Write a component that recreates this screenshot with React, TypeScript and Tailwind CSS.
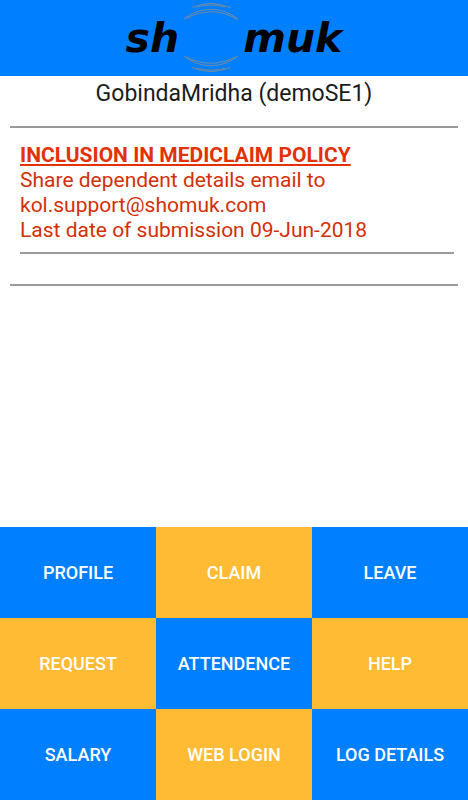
type MenuItem = {
  label: string
  accent: boolean
}

const menu: MenuItem[] = [
  { label: 'PROFILE', accent: false },
  { label: 'CLAIM', accent: true },
  { label: 'LEAVE', accent: false },
  { label: 'REQUEST', accent: true },
  { label: 'ATTENDENCE', accent: false },
  { label: 'HELP', accent: true },
  { label: 'SALARY', accent: false },
  { label: 'WEB LOGIN', accent: true },
  { label: 'LOG DETAILS', accent: false },
]

function Rings() {
  return (
    <svg
      width="56"
      height="76"
      viewBox="0 0 56 76"
      fill="none"
      stroke="#7f8a94"
      strokeWidth="0.9"
      strokeLinecap="round"
      aria-hidden="true"
      className="mx-1 shrink-0"
    >
      <path d="M9 7.500Q28-.8 47 7.500" />
      <path d="M14 6.800Q28 3.200 42 6.800" />
      <path d="M1 19Q13 9.300 28 9.300T55 19" />
      <path d="M3 18.500Q15 11.800 28 11.800T53 18.500" />
      <path d="M1 56Q13 65.700 28 65.700T55 56" />
      <path d="M3 57Q15 63.200 28 63.200T53 57" />
      <path d="M9 67.500Q28 75.800 47 67.500" />
      <path d="M14 68.500Q28 71.800 42 68.500" />
    </svg>
  )
}

export default function App() {
  return (
    <div className="min-h-screen flex flex-col bg-white font-[Roboto,sans-serif]">
      <header className="flex h-[76px] items-center justify-center bg-[#0080ff]">
        <h1 className="flex items-center font-['DejaVu_Sans',sans-serif] text-[41px] leading-none font-bold italic text-black">
          <span>sh</span>
          <Rings />
          <span>muk</span>
        </h1>
      </header>

      <main className="flex-1 px-[10px]">
        <p className="pt-[2px] text-center text-[23px] leading-[32px] text-[#1c1c1c]">
          GobindaMridha (demoSE1)
        </p>
        <hr className="mt-4 border-t-2 border-[#9a9a9a]" />

        <section className="mt-[15px] pl-[10px] pr-1 text-[21px] leading-[25px] text-[#d23008]">
          <h2 className="font-bold text-[#e23205] underline">INCLUSION IN MEDICLAIM POLICY</h2>
          <p>Share dependent details email to</p>
          <p>kol.support@shomuk.com</p>
          <p>Last date of submission 09-Jun-2018</p>
          <hr className="mt-[9px] border-t-2 border-[#9a9a9a]" />
        </section>
        <hr className="mt-[30px] border-t-2 border-[#9a9a9a]" />
      </main>

      <nav className="grid grid-cols-3">
        {menu.map(item => (
          <button
            key={item.label}
            type="button"
            className={`h-[91px] text-[18px] font-medium text-white ${
              item.accent ? 'bg-[#ffbb33]' : 'bg-[#0080ff]'
            }`}
          >
            {item.label}
          </button>
        ))}
      </nav>
    </div>
  )
}
